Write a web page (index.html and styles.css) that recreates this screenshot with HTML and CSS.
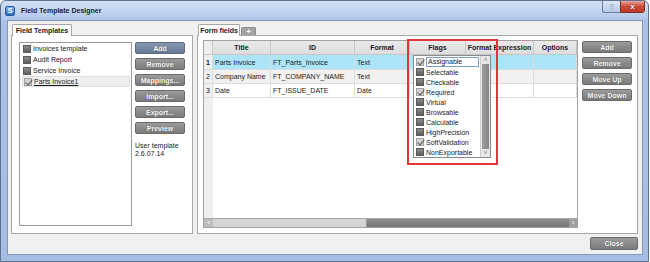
FILE: index.html
```html
<!DOCTYPE html>
<html>
<head>
<meta charset="utf-8">
<title>Field Template Designer</title>
<link rel="stylesheet" href="styles.css">
</head>
<body>
<div class="window">
  <div class="titlebar">
    <span class="app-icon">S</span>
    <span class="title">Field Template Designer</span>
    <div class="caption-btns">
      <span class="cbtn help">?</span>
      <span class="cbtn close">x</span>
    </div>
  </div>
  <div class="client">
    <div class="groups">
      <div class="group left">
        <div class="tabs"><span class="tab active t1">Field Templates</span></div>
        <div class="panel lpanel">
          <div class="list">
            <div class="item"><span class="cb"></span>Invoices template</div>
            <div class="item"><span class="cb"></span>Audit Report</div>
            <div class="item"><span class="cb"></span>Service Invoice</div>
            <div class="item sel"><span class="cb on"></span><span class="ul">Parts Invoice1</span></div>
          </div>
          <div class="btncol">
            <button class="btn blue">Add</button>
            <button class="btn">Remove</button>
            <button class="btn">Mappings...</button>
            <button class="btn">Import...</button>
            <button class="btn">Export...</button>
            <button class="btn">Preview</button>
            <div class="info">User template<br>2.6.07.14</div>
          </div>
        </div>
      </div>
      <div class="group right">
        <div class="tabs"><span class="tab active t2">Form fields</span><span class="tab plus">+</span></div>
        <div class="panel rpanel">
          <div class="gridwrap">
            <div class="grid">
              <div class="grow head">
                <div class="c rn"></div>
                <div class="c">Title</div>
                <div class="c">ID</div>
                <div class="c">Format</div>
                <div class="c">Flags</div>
                <div class="c">Format Expression</div>
                <div class="c">Options</div>
              </div>
              <div class="grow r1">
                <div class="c rn b">1</div>
                <div class="c">Parts Invoice</div>
                <div class="c">FT_Parts_Invoice</div>
                <div class="c">Text</div>
                <div class="c"></div>
                <div class="c"></div>
                <div class="c"></div>
              </div>
              <div class="grow r2">
                <div class="c rn">2</div>
                <div class="c">Company Name</div>
                <div class="c">FT_COMPANY_NAME</div>
                <div class="c">Text</div>
                <div class="c"></div>
                <div class="c"></div>
                <div class="c"></div>
              </div>
              <div class="grow r3">
                <div class="c rn">3</div>
                <div class="c">Date</div>
                <div class="c">FT_ISSUE_DATE</div>
                <div class="c">Date</div>
                <div class="c"></div>
                <div class="c"></div>
                <div class="c"></div>
              </div>
            </div>
            <div class="hbar">
              <div class="harr">&lsaquo;</div>
              <div class="hthumb"></div>
              <div class="htrack"></div>
              <div class="harr hend">&rsaquo;</div>
            </div>
          </div>
          <div class="btncol">
            <button class="btn">Add</button>
            <button class="btn">Remove</button>
            <button class="btn">Move Up</button>
            <button class="btn">Move Down</button>
          </div>
        </div>
      </div>
    </div>
    <div class="footer"><button class="btn close-btn">Close</button></div>
  </div>

  <div class="highlight"></div>
  <div class="flags-popup">
    <div class="flist">
      <div class="fi"><span class="cb on"></span><span class="cur">Assignable</span></div>
      <div class="fi"><span class="cb"></span>Selectable</div>
      <div class="fi"><span class="cb"></span>Checkable</div>
      <div class="fi"><span class="cb on"></span>Required</div>
      <div class="fi"><span class="cb"></span>Virtual</div>
      <div class="fi"><span class="cb"></span>Browsable</div>
      <div class="fi"><span class="cb"></span>Calculable</div>
      <div class="fi"><span class="cb"></span>HighPrecision</div>
      <div class="fi"><span class="cb on"></span>SoftValidation</div>
      <div class="fi"><span class="cb"></span>NonExportable</div>
    </div>
    <div class="vscroll">
      <span class="varr">&#708;</span>
      <span class="vthumb"></span>
      <span class="varr">&#709;</span>
    </div>
  </div>
</div>
</body>
</html>
```

FILE: styles.css
```css
* { box-sizing: border-box; }
html, body { margin: 0; padding: 0; background: #ffffff; }
body { font-family: "Liberation Sans", Arial, sans-serif; font-size: 7px; color: #1a1a1a; }

.window {
  position: relative;
  width: 649px;
  height: 262px;
  border: 1px solid #5f7191;
  border-radius: 6px 6px 0 0;
  background: linear-gradient(180deg, #d3e0f4 0px, #bfd1ee 12px, #abc2e8 20px, #a6bde4 100%);
  overflow: hidden;
}

.titlebar {
  height: 19px;
  display: flex;
  align-items: center;
  padding-left: 4px;
  position: relative;
}
.app-icon {
  width: 10px; height: 10px;
  border-radius: 2px;
  background: linear-gradient(#7fb0e8, #2f6fc2);
  border: 1px solid #2a5a9a;
  color: #fff;
  font-weight: bold;
  font-size: 7px;
  line-height: 8px;
  text-align: center;
}
.title { margin-left: 6px; font-weight: bold; font-size: 7px; color: #1b2230; }
.caption-btns {
  position: absolute; right: 3px; top: -1px;
  display: flex;
}
.cbtn {
  height: 13px;
  display: flex; align-items: center; justify-content: center;
  color: #fff; font-weight: bold; font-size: 8px;
  border: 1px solid #6c7c98;
}
.cbtn.help { width: 18px; background: linear-gradient(#dde7f6, #b5c8e6); color: #9aa6b8; border-radius: 0 0 0 3px; border-right: none; }
.cbtn.close { width: 25px; background: linear-gradient(#e9a99c, #cc4a38 50%, #c0392a); border-color: #7a2b22; border-radius: 0 0 3px 0; text-shadow: 0 0 2px #400; }

.client {
  margin: 0 5px 0 6px;
  height: 235px;
  background: #f0f0f0;
  border: 1px solid #8797b4;
  padding: 2px 4px 0 3px;
  display: flex;
  flex-direction: column;
}

.groups { display: flex; gap: 4px; }
.group.left { width: 182px; }
.group.right { width: 441px; }

.tabs { height: 12px; display: flex; align-items: flex-end; }
.tab {
  height: 12px;
  background: #ffffff;
  border: 1px solid #a7a7a7;
  border-bottom: none;
  border-radius: 2px 2px 0 0;
  font-weight: bold;
  display: flex; align-items: center; justify-content: center;
  margin-bottom: -1px;
  position: relative;
  z-index: 1;
}
.tab.t1 { width: 60px; margin-left: 1px; }
.tab.t2 { width: 42px; margin-left: 1px; }
.tab.plus {
  width: 15px; height: 8px;
  background: #a3a3a3; border-color: #8c8c8c;
  color: #fff; font-size: 8px;
  margin-left: 1px; margin-bottom: 0;
}

.panel {
  height: 199px;
  background: #ffffff;
  border: 1px solid #a7a7a7;
  display: flex;
  align-items: flex-start;
}
.lpanel { padding: 6px 0 0 7px; gap: 3px; }
.rpanel { padding: 4px 0 0 5px; gap: 4px; }

.list {
  width: 113px; height: 184px;
  border: 1px solid #9a9a9a;
  background: #fff;
  padding: 0 1px 0 3px;
}
.item { height: 11px; display: flex; align-items: center; gap: 2px; }
.item.sel { background: #efefef; border: 1px solid #e0e0e0; margin-left: -1px; padding-left: 1px; }
.ul { text-decoration: underline; }

.cb {
  width: 8px; height: 8px;
  border: 1px solid #5a5a5a;
  background: linear-gradient(#8c8c8c, #5f5f5f);
  flex: none;
  position: relative;
}
.cb.on { background: #d4d4d4; border-color: #a0a0a0; }
.cb.on::after {
  content: "";
  position: absolute;
  left: 2px; top: -1px;
  width: 3px; height: 6px;
  border: solid #555;
  border-width: 0 1px 1px 0;
  transform: rotate(40deg);
}

.btncol { width: 50px; display: flex; flex-direction: column; gap: 4px; }
.rpanel .btncol { margin-top: 1px; }
.btn {
  width: 50px; height: 12px;
  padding: 0;
  font-family: "Liberation Sans", Arial, sans-serif;
  font-size: 7px; font-weight: bold;
  color: #ffffff;
  text-shadow: 0 0 1px #3a3a3a;
  background: linear-gradient(#9b9b9b, #7b7b7b);
  border: 1px solid #6a6a6a;
  border-radius: 2px;
}
.btn.blue { background: linear-gradient(#8795ae, #677896); border-color: #5b6a85; }
.info { margin-top: 4px; line-height: 8px; color: #222; }

.gridwrap {
  width: 375px;
  border: 1px solid #a2a2a2;
  background: #ffffff;
}
.grid {
  height: 177px;
  background: linear-gradient(90deg, #efefef 0 9px, #ffffff 9px);
}
.grow { display: grid; grid-template-columns: 9px 58px 84px 55px 56px 68px 43px; }
.c {
  border-right: 1px solid #dcdcdc;
  border-bottom: 1px solid #dcdcdc;
  padding-left: 2px;
  display: flex; align-items: center;
  white-space: nowrap; overflow: hidden;
}
.head { height: 14px; background: linear-gradient(#eaeaea, #dcdcdc); }
.head .c { justify-content: center; font-weight: bold; padding-left: 0; border-color: #c6c6c6; }
.r1 { height: 15px; background: #ade5f8; }
.r2 { height: 14px; background: #f1f1f1; }
.r3 { height: 14px; background: #ffffff; }
.rn { background: #efefef; justify-content: center; padding-left: 0; }
.rn.b { font-weight: bold; }

.hbar {
  height: 9px;
  display: flex;
  background: #6e6e6e;
  border-top: 1px solid #a8a8a8;
}
.harr { width: 9px; height: 8px; color: #ffffff; font-size: 8px; line-height: 7px; text-align: center; background: #bdbdbd; }
.harr.hend { width: 8px; background: #a0a0a0; }
.hthumb { width: 154px; height: 8px; background: #d4d4d4; border-right: 1px solid #9a9a9a; }
.htrack { flex: 1; height: 8px; background: linear-gradient(#8e8e8e, #777777); }

.footer { display: flex; justify-content: flex-end; padding-top: 3px; }
.close-btn { width: 48px; height: 13px; }

.highlight {
  position: absolute;
  left: 406px; top: 38px;
  width: 91px; height: 126px;
  border: 2px solid #e2353b;
}
.flags-popup {
  position: absolute;
  left: 412px; top: 54px;
  width: 78px; height: 103px;
  border: 1px solid #8a8a8a;
  background: #fff;
  display: flex;
}
.flist { flex: 1; padding: 1px 0 0 2px; }
.fi { height: 10px; display: flex; align-items: center; gap: 2px; }
.cur { border: 1px solid #7a9fd0; padding: 0 1px; height: 10px; line-height: 8px; flex: 1; margin-right: 1px; }
.vscroll { width: 10px; display: flex; flex-direction: column; background: #e6e6e6; border-left: 1px solid #cfcfcf; }
.varr { height: 8px; font-size: 7px; line-height: 8px; text-align: center; color: #888; background: #e8e8e8; }
.vthumb { flex: 1; background: linear-gradient(90deg, #9e9e9e, #858585); margin: 0 1px; }
```
